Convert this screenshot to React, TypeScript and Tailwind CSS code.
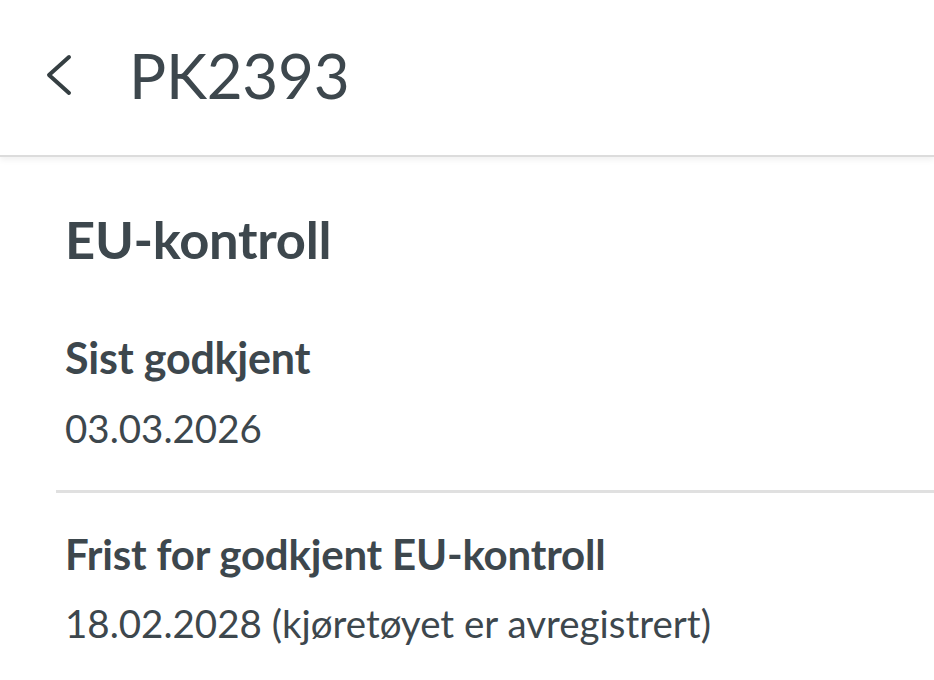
import React from 'react';

const font = { fontFamily: 'Lato, "Noto Sans", sans-serif' };

export default function App() {
  return (
    <div className="min-h-[680px] bg-white text-[#3d474d]" style={font}>
      {/* Header */}
      <div className="flex h-[157px] items-center pb-[5px] border-b-[2px] border-[#dcdcdc] shadow-[0_3px_6px_rgba(0,0,0,0.06)]">
        <svg width="30" height="44" viewBox="0 0 30 44" className="ml-[44px]" fill="none">
          <polyline points="25,4 5,22 25,40" stroke="#353f42" strokeWidth="4" strokeLinecap="round" strokeLinejoin="round" />
        </svg>
        <h1 className="ml-[55px] text-[62px] font-normal leading-none tracking-[-0.3px]">PK2393</h1>
      </div>

      {/* Content */}
      <div className="pt-[54px]">
        <h2 className="pl-[65px] text-[52.5px] font-bold leading-[56px] tracking-[-0.3px]">EU-kontroll</h2>

        <div className="mt-[67px] pl-[65px]">
          <div className="text-[43px] font-bold leading-[48px] tracking-[-0.2px]">Sist godkjent</div>
          <div className="mt-[22px] text-[38.5px] leading-[49px]">03.03.2026</div>
        </div>

        <div className="ml-[56px] mt-[37px] h-[3px] bg-[#e0e0e0]" />

        <div className="mt-[37px] pl-[65px]">
          <div className="text-[42px] font-bold leading-[48px] tracking-[-0.2px]">Frist for godkjent EU-kontroll</div>
          <div className="mt-[21px] text-[38.5px] leading-[49px]">18.02.2028 (kjøretøyet er avregistrert)</div>
        </div>
      </div>
    </div>
  );
}
